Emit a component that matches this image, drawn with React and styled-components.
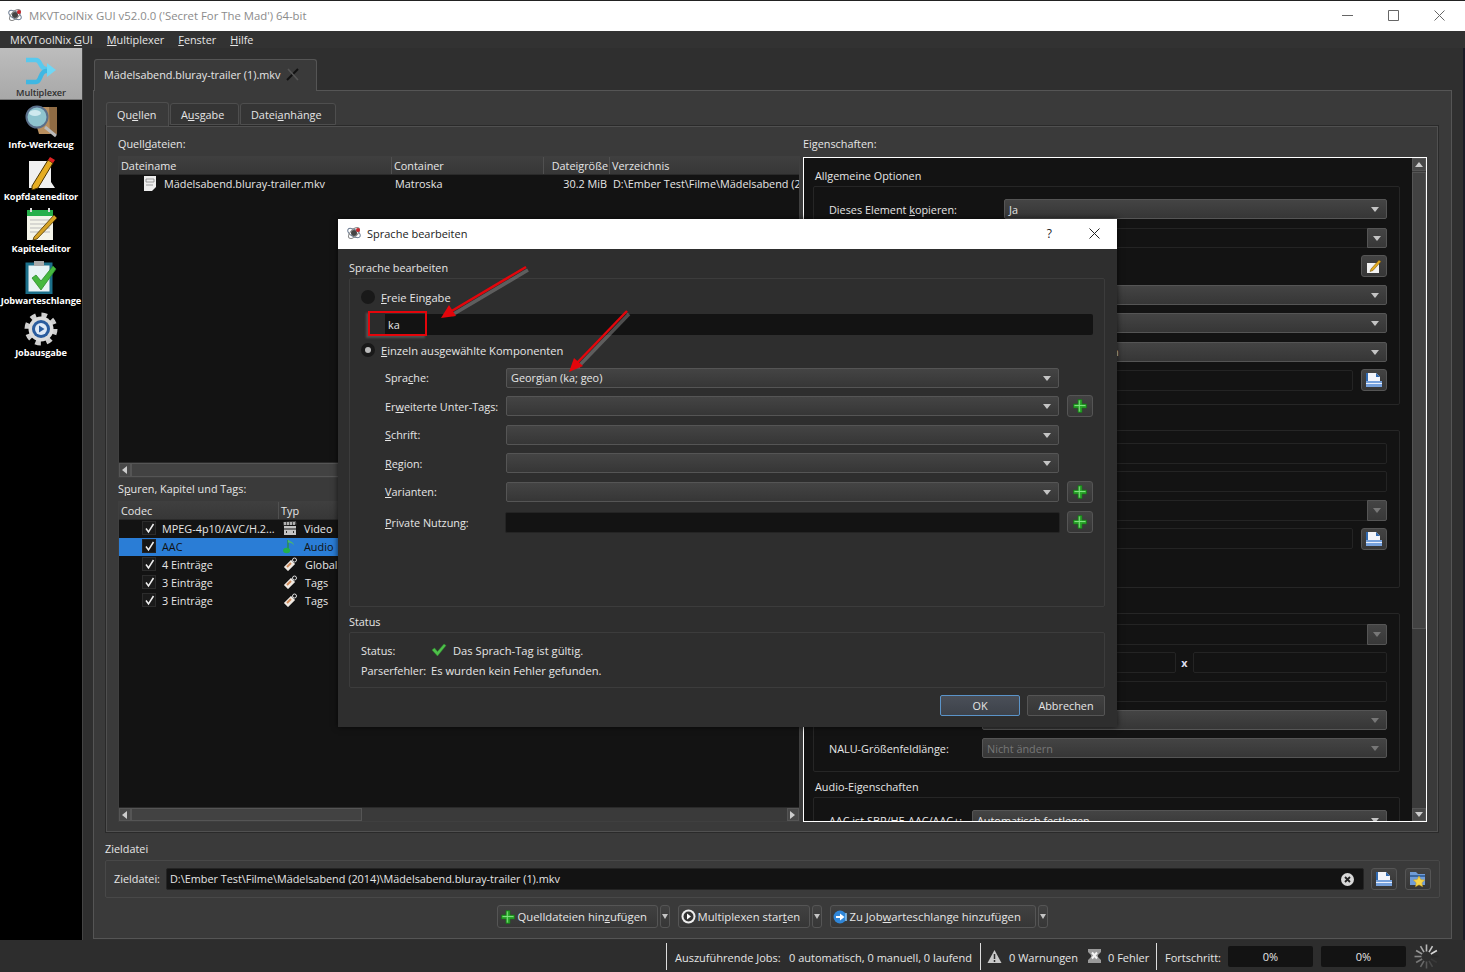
import React from "react";
import styled, { createGlobalStyle } from "styled-components";

const Global = createGlobalStyle`
  html, body { margin: 0; padding: 0; background: #1b1b26; overflow: hidden; }
  * { box-sizing: border-box; }
  u { text-underline-offset: 1px; }
`;
const Root = styled.div`
  position: relative; width: 1465px; height: 972px; overflow: hidden;
  display: flex; flex-direction: column; background: #2f2f2f;
  font-family: "Open Sans", "Noto Sans", sans-serif; font-size: 10.85px; color: #e6e6e6; white-space: nowrap;
`;
const TitleBar = styled.div`
  height: 31px; flex: none; background: #fff; border-top: 1px solid #222; display: flex; align-items: center;
  padding: 0 0 2px 7px; color: #8b8b8b; font-size: 11.35px; gap: 6px;
`;
const WinBtns = styled.div`margin-left: auto; display: flex; align-items: center; gap: ${p => p.$gap || 35}px; padding-right: ${p => p.$pr ?? 20}px; color: #666;`;
const MenuBar = styled.div`height: 17px; flex: none; display: flex; background: #323232; padding-left: 10px; gap: 14px; align-items: center;`;
const Middle = styled.div`flex: 1; display: flex; min-height: 0;`;
const Sidebar = styled.div`width: 83px; flex: none; background: #000; border-right: 1px solid #444; display: flex; flex-direction: column;`;
const SideItem = styled.div`
  height: 52px; display: flex; flex-direction: column; align-items: center; justify-content: flex-end; padding-bottom: ${p => p.$active ? 0 : 1}px;
  font-weight: 700; font-size: 9.2px; letter-spacing: -.1px; color: ${p => p.$active ? "#303030" : "#fff"};
  background: ${p => p.$active ? "linear-gradient(#bdbdbd,#a8a8a8)" : "transparent"};
  ${p => p.$active ? "font-weight:600; border-bottom:1px solid #777;" : ""}
`;
const Main = styled.div`flex: 1; padding: 11px 11px 1px 10px; display: flex; flex-direction: column; min-width: 0; border-right: 2px solid #1b1b26;`;
const FileTabRow = styled.div`display: flex; height: 31px; flex: none; position: relative; z-index: 1;`;
const FileTab = styled.div`
  width: 223px; height: 32px; background: #3a3a3a; border: 1px solid #555; border-bottom: none; border-radius: 3px 3px 0 0; padding-bottom: 2px;
  display: flex; align-items: center; gap: 6px; padding-left: 9px; margin-left: 1px;
`;
const Pane = styled.div`
  flex: 1; background: #3a3a3a; border: 1px solid #555; padding: 11px 12px 0 11px; display: flex; flex-direction: column; min-height: 0;
`;
const InnerTabs = styled.div`display: flex; gap: 1px; height: 23px; flex: none; position: relative; z-index: 1; padding-left: 1px;`;
const InnerTab = styled.div`
  width: ${p => p.$w}px; height: ${p => p.$on ? 24 : 22}px; margin-top: ${p => p.$on ? 0 : 1}px; background: ${p => p.$on ? "#3a3a3a" : "#353535"};
  border: 1px solid #4e4e4e; border-bottom: ${p => p.$on ? "none" : "1px solid #4e4e4e"}; border-radius: 3px 3px 0 0;
  display: flex; align-items: center; padding-left: 10px;
`;
const InnerPane = styled.div`
  height: 708px; flex: none; border: 1px solid #2a2a2a; box-shadow: inset 0 0 0 1px #505050; padding: 10px 11px 10px 12px; display: flex; gap: 3px;
`;
const LeftCol = styled.div`width: 682px; flex: none; display: flex; flex-direction: column;`;
const RightCol = styled.div`flex: 1; display: flex; flex-direction: column; min-width: 0;`;
const PaneLabel = styled.div`height: ${p => p.$h || 20}px; flex: none; display: flex; align-items: center; padding-bottom: ${p => p.$pb || 0}px;`;
const Tree = styled.div`
  height: ${p => p.$h}px; flex: none; background: #131313; border: 1px solid #3f3f3f; display: flex; flex-direction: column; overflow: hidden;
`;
const Header = styled.div`
  height: 18px; flex: none; display: grid; grid-template-columns: ${p => p.$cols}; background: linear-gradient(#3f3f3f,#373737); border-bottom: 1px solid #2a2a2a;
`;
const HCell = styled.div`padding-left: 2px; padding-right: ${p => p.$pr || 0}px; border-right: ${p => p.$last ? "none" : "1px solid #505050"}; display: flex; align-items: center; overflow: hidden; justify-content: ${p => p.$right ? "flex-end" : "flex-start"};`;
const TreeRow = styled.div`
  height: 18px; flex: none; display: grid; grid-template-columns: ${p => p.$cols}; align-items: center; padding-bottom: 2px; background: ${p => p.$sel ? "#2a7dd6" : "transparent"}; color: ${p => p.$sel ? "#111" : "#e6e6e6"};
`;
const Cell = styled.div`display: flex; align-items: center; overflow: hidden; padding-left: ${p => p.$pl || 0}px; padding-right: ${p => p.$pr || 0}px; justify-content: ${p => p.$right ? "flex-end" : "flex-start"}; gap: ${p => p.$gap || 0}px;`;
const CheckBox = styled.div`
  width: 14px; height: 14px; flex: none; background: ${p => p.$sel ? "#161616" : "#1a1a1a"}; border: 1px solid ${p => p.$sel ? "#222" : "#2c2c2c"}; display: flex; align-items: center; justify-content: center; margin-right: 6px;
`;
const Spacer = styled.div`flex: 1;`;
const HScroll = styled.div`height: ${p => p.$h}px; flex: none; background: #3a3a3a; border-top: 1px solid #2a2a2a; display: flex; align-items: stretch;`;
const ScrollBtn = styled.div`width: 12px; flex: none; background: #484848; border: 1px solid #555; display: flex; align-items: center; justify-content: center; color: #ccc;`;
const Thumb = styled.div`width: ${p => p.$w}px; flex: none; background: #424242; border: 1px solid #555;`;
const PropsFrame = styled.div`
  margin-top: 1px; height: 665px; flex: none; border: 1px solid #fff; background: #131313; display: flex; overflow: hidden;
`;
const PropsContent = styled.div`flex: 1; min-width: 0; padding-left: 9px; padding-right: 12px; overflow: hidden;`;
const VScroll = styled.div`width: 14px; flex: none; background: #3a3a3a; display: flex; flex-direction: column;`;
const VBtn = styled.div`height: 13px; flex: none; background: #484848; border: 1px solid #555; display: flex; align-items: center; justify-content: center; color: #ccc;`;
const VThumb = styled.div`height: 457px; flex: none; background: #424242; border: 1px solid #555; margin-top: 1px;`;
const SectionTitle = styled.div`height: ${p => p.$h || 25}px; padding-top: ${p => p.$pt || 7}px; line-height: 16px; padding-left: 2px;`;
const Group = styled.div`
  height: ${p => p.$h}px; border: 1px solid #262626; border-radius: 2px; padding: ${p => p.$pt || 8}px 12px 0 15px;
`;
const Row = styled.div`height: 28.5px; display: flex; align-items: center; gap: ${p => p.$gap || 8}px; margin-top: ${p => p.$mt || 0}px;`;
const Label = styled.div`width: ${p => p.$w}px; flex: none; margin-right: -8px;`;
const Combo = styled.div`
  flex: ${p => p.$w ? "none" : 1}; width: ${p => p.$w ? p.$w + "px" : "auto"}; min-width: 0; height: 20px; border: 1px solid #555; border-radius: 2px; background: linear-gradient(#444,#363636);
  display: flex; align-items: center; padding-left: 4px; color: ${p => p.$dim ? "#777" : "#e6e6e6"}; position: relative;
`;
const DownArrow = styled.i`
  position: absolute; right: ${p => p.$r || 7}px; top: 7px; width: 0; height: 0; border-left: 4px solid transparent; border-right: 4px solid transparent; border-top: 5px solid ${p => p.$dim ? "#777" : "#c4c4c4"};
`;
const DarkField = styled.div`
  flex: ${p => p.$w ? "none" : 1}; width: ${p => p.$w ? p.$w + "px" : "auto"}; min-width: 0; height: ${p => p.$h || 21}px; background: #131313; border: 1px solid ${p => p.$line || "#242424"}; border-radius: 2px; display: flex; align-items: center; padding-left: 3px; position: relative; margin-left: ${p => p.$ml || 0}px; margin-right: ${p => p.$mr || 0}px;
`;
const ComboCap = styled.div`
  position: absolute; right: -1px; top: -1px; bottom: -1px; width: 20px; background: linear-gradient(#444,#383838); border: 1px solid #555; border-radius: 0 2px 2px 0;
`;
const IconBtn = styled.div`
  width: 26px; height: 22px; flex: none; background: linear-gradient(#434343,#363636); border: 1px solid #555; border-radius: 3px; display: flex; align-items: center; justify-content: center; margin-left: ${p => p.$ml || 0}px;
`;
const XMark = styled.div`width: 17px; text-align: center; flex: none; font-weight: 700; margin: 0 -8px; color: #dde;`;
const DestTitle = styled.div`height: 27px; flex: none; display: flex; align-items: flex-end; padding-bottom: 4px;`;
const DestBox = styled.div`
  height: 38px; flex: none; width: 1335px; border: 1px solid #484848; border-radius: 2px; display: flex; align-items: center; padding: 0 8px 0 8px; gap: 6px;
`;
const DestText = styled.span`padding-bottom: 2px;`;
const Actions = styled.div`height: 37px; flex: none; display: flex; align-items: center; justify-content: center; gap: 8px; font-size: 11.3px;`;
const SplitBtn = styled.div`display: flex; gap: 2px;`;
const ActionBtn = styled.div`
  height: 23px; width: ${p => p.$w}px; background: linear-gradient(#414141,#363636); border: 1px solid #555; border-radius: 3px; display: flex; align-items: center; padding-left: 2px; gap: 2px; color: #e6e6e6;
`;
const DropBtn = styled.div`
  position: relative; height: 23px; width: 10px; background: linear-gradient(#414141,#363636); border: 1px solid #555; border-radius: 3px;
`;
const SmallDown = styled(DownArrow)`right: 1px; top: 8px; border-left-width: 3px; border-right-width: 3px; border-top-width: 5px;`;
const StatusBar = styled.div`height: 32px; flex: none; display: flex; align-items: center; padding-left: 666px; background: #2d2d2d; position: relative; font-size: 11px;`;
const Sep = styled.div`width: 1px; height: 27px; background: #ddd; flex: none; margin-right: ${p => p.$mr}px;`;
const StatusText = styled.span`width: ${p => p.$w}px; flex: none; padding-top: 3px; margin-left: ${p => p.$ml || 0}px;`;
const Progress = styled.div`width: 85px; height: 21px; flex: none; background: #131313; display: flex; align-items: center; justify-content: center; margin-right: ${p => p.$mr || 0}px; border-radius: 2px;`;
const Dialog = styled.div`
  position: absolute; left: 338px; top: 219px; width: 779px; height: 508px; display: flex; flex-direction: column; background: #2e2e2e; box-shadow: 0 0 6px rgba(0,0,0,.7);
`;
const DlgTitle = styled.div`height: 30px; flex: none; background: #fff; color: #222; display: flex; align-items: center; padding: 0 17px 2px 8px; gap: 5px; font-size: 11px;`;
const HelpMark = styled.span`color: #222; font-size: 12px;`;
const DlgBody = styled.div`flex: 1; padding: 0 12px 0 11px; display: flex; flex-direction: column;`;
const DlgCaption = styled.div`height: ${p => p.$h}px; flex: none; display: flex; align-items: center; padding-top: ${p => p.$pt || 0}px;`;
const DlgBox = styled.div`height: ${p => p.$h}px; flex: none; border: 1px solid #3c3c3c; border-radius: 2px; padding: ${p => p.$pt}px 11px 0 ${p => p.$pl}px;`;
const RadioRow = styled.div`height: 20px; display: flex; align-items: center; gap: 6px; font-size: 11.15px;`;
const Radio = styled.div`
  width: 14px; height: 14px; border-radius: 50%; background: #191919; display: flex; align-items: center; justify-content: center;
  &::after { content: ""; width: 6px; height: 6px; border-radius: 50%; background: ${p => p.$on ? "#bbb" : "transparent"}; }
`;
const FreeInput = styled.div`height: 21px; margin: 7px 0 5px 10px; background: #131313; border-radius: 2px; display: flex; align-items: center; padding-left: 17px;`;
const DlgRows = styled.div`padding-left: 24px; margin-top: 3.5px;`;
const StatusLine = styled.div`height: 20.5px; display: flex; align-items: center; font-size: 11.2px;`;
const StatusKey = styled.div`width: 70px; flex: none; font-size: 10.85px;`;
const StatusMsg = styled.span`margin-left: 6px;`;
const DlgButtons = styled.div`display: flex; justify-content: flex-end; gap: 7px; margin-top: 7px;`;
const DlgBtn = styled.div`
  width: ${p => p.$w}px; height: 21px; border-radius: 2px; display: flex; align-items: center; justify-content: center;
  background: ${p => p.$primary ? "linear-gradient(#4a4f58,#3d424a)" : "linear-gradient(#414141,#363636)"}; border: 1px solid ${p => p.$primary ? "#5b94c9" : "#555"};
`;
const RedBox = styled.div`
  position: absolute; left: 30px; top: 92px; width: 59px; height: 25px; border: 2px solid #e4050b; box-shadow: -2px 2px 2px rgba(110,110,110,.55);
  background: linear-gradient(90deg, #2b2b2b 0 15px, transparent 15px);
`;
const ArrowLayer = styled.svg`position: absolute; left: 0; top: 0; overflow: visible; pointer-events: none;`;

/* icons */
const Plus = ({ s = 16 }) => (
  <svg width={s} height={s} viewBox="0 0 16 16"><path d="M6 1.5h4v4.500h4.500v4H10v4.500H6V10H1.500V6H6z" fill="#2aa52a" stroke="#177217" strokeWidth=".7" /><path d="M7.300 2.500v11M2.500 7.500h11" stroke="#7fe07f" strokeWidth="1" /></svg>
);
const Floppy = () => (
  <svg width="18" height="16" viewBox="0 0 18 16"><path d="M1 1h2v8H1z" fill="#2f69b0" /><path d="M3 1h8l4 4v5H3z" fill="#f2f4fa" /><path d="M11 1l4 4h-4z" fill="#2f69b0" /><path d="M1 9h16v6H1z" fill="#76a1dc" /><path d="M1 11.500h16" stroke="#e8f0ff" strokeWidth="1" /></svg>
);
const FolderStar = () => (
  <svg width="18" height="18" viewBox="0 0 18 18"><path d="M1 2h6l2 2h7v11H1z" fill="#6f9cd8" /><path d="M1 6h15" stroke="#27568f" strokeWidth="1.500" /><path d="M10 6l1.800 3.600 3.900.5-2.800 2.700.7 3.900-3.600-1.900-3.500 1.900.7-3.900L4.300 10l3.900-.5z" fill="#f7d64b" stroke="#c89a1c" strokeWidth=".5" /></svg>
);
const EditDoc = () => (
  <svg width="18" height="16" viewBox="0 0 18 16"><path d="M2 5h12v10H2z" fill="#f2f2f2" /><path d="M6 11l8-9 2 1.500-8 9-3 1z" fill="#e2aa20" stroke="#6b4a00" strokeWidth=".5" /></svg>
);
const FileIco = () => (
  <svg width="12" height="15" viewBox="0 0 12 15"><path d="M0 0h12v11l-4 4H0z" fill="#ededed" /><path d="M2 3h8v3H2zM2 9h7" fill="#ededed" stroke="#888" strokeWidth=".8" /></svg>
);
const Clapper = () => (
  <svg width="14" height="15" viewBox="0 0 14 15"><path d="M1 5h12v9H1z" fill="#c4c4c4" /><path d="M0 1l13-1 .5 3.500-13 1z" fill="#555" /><path d="M2 1v3M5 1v3M8 1v3M11 1v3" stroke="#eee" strokeWidth="1.200" /><path d="M1 8h12" stroke="#333" strokeWidth="1.200" /><path d="M3 11h1M10 11h1" stroke="#333" strokeWidth="2" /></svg>
);
const Note = () => (
  <svg width="14" height="16" viewBox="0 0 14 16"><path d="M5 2v10" stroke="#2a8f45" strokeWidth="1.400" /><path d="M5 1c1 3 6 2 6 7-1-3-3-3-6-3.500z" fill="#4cb96a" /><ellipse cx="3.600" cy="12.500" rx="3.500" ry="2.700" fill="#23b04c" /></svg>
);
const Tag = () => (
  <svg width="15" height="15" viewBox="0 0 15 15"><path d="M1 10l7-7 4 4-7 7z" fill="#efe9e2" stroke="#aaa" strokeWidth=".5" /><path d="M4 10l4-4" stroke="#d08a5a" strokeWidth="2" /><circle cx="11.500" cy="3" r="2" fill="none" stroke="#ddd" strokeWidth="1" /></svg>
);
const Tick = () => (
  <svg width="11" height="11" viewBox="0 0 11 11"><path d="M2 5.500l2.500 3.500L9.500 1" fill="none" stroke="#f0f0f0" strokeWidth="1.500" /></svg>
);
const GreenCheck = () => (
  <svg width="16" height="14" viewBox="0 0 16 14"><path d="M1 7l2.500-2 3 3.500L13 1l2 1.500L6.500 13z" fill="#4ec04a" stroke="#2c8a2c" strokeWidth=".5" /></svg>
);
const PlayCircle = () => (
  <svg width="15" height="15" viewBox="0 0 15 15"><circle cx="7.500" cy="7.500" r="7" fill="#eee" /><circle cx="7.500" cy="7.500" r="5" fill="#333" /><path d="M6 4.500l4 3-4 3z" fill="#fff" /></svg>
);
const BlueArrow = () => (
  <svg width="15" height="14" viewBox="0 0 15 14"><circle cx="7" cy="7" r="6.500" fill="#2f86d8" /><path d="M3 6h4V3.500L11.500 7 7 10.500V8H3z" fill="#fff" /><path d="M13 3v8" stroke="#8cc7f5" strokeWidth="1.500" /></svg>
);
const ClearX = () => (
  <svg width="13" height="13" viewBox="0 0 13 13" style={{ position: "absolute", right: 9, top: 4 }}><circle cx="6.500" cy="6.500" r="6.500" fill="#d8d8d8" /><path d="M4 4l5 5M9 4l-5 5" stroke="#222" strokeWidth="1.800" /></svg>
);
const WarnIco = () => (
  <svg width="15" height="15" viewBox="0 0 15 15"><path d="M7.500 1L14.500 14H.5z" fill="#c9c9c9" /><path d="M7.500 5v5M7.500 11v2" stroke="#2d2d2d" strokeWidth="1.500" /></svg>
);
const ErrIco = () => (
  <svg width="13" height="14" viewBox="0 0 13 14"><path d="M0 0h13v3l-3 3v2l3 3v3H0v-3l3-3V6L0 3z" fill="#9a9a9a" /><path d="M4 3.500l5 6M9 3.500l-5 6" stroke="#f4f4f4" strokeWidth="2" /></svg>
);
const Spinner = () => (
  <svg width="27" height="27" viewBox="0 0 27 27">{Array.from({ length: 12 }).map((_, i) => {
    const a = i * Math.PI / 6; const c = 40 + i * 16;
    return <line key={i} x1={13.500 + 5 * Math.cos(a)} y1={13.500 + 5 * Math.sin(a)} x2={13.500 + 12 * Math.cos(a)} y2={13.500 + 12 * Math.sin(a)} stroke={`rgb(${c},${c},${c})`} strokeWidth="1.600" />;
  })}</svg>
);
const AppIco = () => (
  <svg width="16" height="16" viewBox="0 0 16 16"><ellipse cx="8" cy="8" rx="7" ry="3.500" fill="none" stroke="#6a7a90" strokeWidth="1" transform="rotate(30 8 8)" /><ellipse cx="8" cy="8" rx="7" ry="3.500" fill="none" stroke="#8a8a8a" strokeWidth="1" transform="rotate(-45 8 8)" /><circle cx="8" cy="8" r="3" fill="#444" /><circle cx="12" cy="5" r="2" fill="#c8262c" /></svg>
);
const PinX = () => (
  <svg width="13" height="13" viewBox="0 0 13 13"><path d="M1 12L12 1" stroke="#111" strokeWidth="2" /><path d="M2 1l10 11" stroke="#555" strokeWidth="1.600" /></svg>
);
const MuxIco = () => (
  <svg width="32" height="30" viewBox="0 0 32 30"><path d="M1 4h10c5 0 4 9 10 9h4" fill="none" stroke="#58c9ee" strokeWidth="4.500" /><path d="M1 26h10c5 0 4-11 10-11h4" fill="none" stroke="#3fb7e2" strokeWidth="4.500" /><path d="M22 7l9 7-9 7z" fill="#6fd7f5" /></svg>
);
const InfoIco = () => (
  <svg width="36" height="34" viewBox="0 0 36 34"><path d="M8 3h26v27H16z" fill="#b98f5f" /><path d="M26 3h8v27h-7z" fill="#8f6b44" /><path d="M22 23l11 9" stroke="#bbb" strokeWidth="3" /><circle cx="14" cy="13" r="10.500" fill="#8fc4cf" stroke="#5a6f8a" strokeWidth="2" /><ellipse cx="12" cy="9" rx="6" ry="3" fill="#cfe9ef" /></svg>
);
const HeaderIco = () => (
  <svg width="34" height="34" viewBox="0 0 34 34"><path d="M5 5h22v21l4 6H5z" fill="#f0f0f0" /><path d="M8 30L24 4l5 3-15 25-6 2z" fill="#e5ad23" stroke="#4b3400" strokeWidth="1" /><path d="M24 4l2-3 5 3-2 3z" fill="#d22" /></svg>
);
const ChapterIco = () => (
  <svg width="34" height="36" viewBox="0 0 34 36"><path d="M3 6h26v28H3z" fill="#f4f4ea" /><path d="M3 4h26v6H3z" fill="#27b04b" /><path d="M6 14h20M6 18h20M6 22h20M6 26h20" stroke="#bbb" /><path d="M7 2v4M25 2v4" stroke="#ddd" strokeWidth="2" /><path d="M10 31L30 9l3 3-20 21-4 1z" fill="#d6a325" stroke="#4b3400" strokeWidth=".8" /></svg>
);
const QueueIco = () => (
  <svg width="32" height="34" viewBox="0 0 32 34"><path d="M2 4h24v29H2z" fill="#e8f3f5" stroke="#1b6f8a" strokeWidth="3" /><path d="M9 1h10v5H9z" fill="#aaa" /><path d="M7 18l4-3 5 6L28 6l3 3-15 21z" fill="#46b83f" stroke="#2a8a2a" strokeWidth=".8" /></svg>
);
const GearIco = () => (
  <svg width="34" height="34" viewBox="0 0 34 34"><circle cx="17" cy="17" r="14" fill="none" stroke="#cfcfcf" strokeWidth="5" strokeDasharray="5.500 5.500" /><circle cx="17" cy="17" r="12.500" fill="#dcdcdc" /><circle cx="17" cy="17" r="9" fill="#2a5c9e" /><circle cx="17" cy="17" r="6" fill="#dfe9f6" /><path d="M15 13.500l5.500 3.500-5.500 3.500z" fill="#2a5c9e" /></svg>
);
const Tri = ({ dir }) => {
  const d = { l: "M6 0v8L1 4z", r: "M1 0v8l5-4z", u: "M0 6h8L4 1z", d: "M0 1h8L4 6z" }[dir];
  return <svg width="8" height="8" viewBox="0 0 8 8"><path d={d} fill="#ccc" /></svg>;
};

const C1 = "273px 152px 66px 1fr";
const C2 = "160px 1fr";
const tracks = [
  ["MPEG-4p10/AVC/H.2...", <Clapper />, "Video"],
  ["AAC", <Note />, "Audio", true],
  ["4 Einträge", <Tag />, "Global"],
  ["3 Einträge", <Tag />, "Tags"],
  ["3 Einträge", <Tag />, "Tags"],
];

function PropertiesPanel() {
  return (
    <PropsFrame>
      <PropsContent>
        <SectionTitle $h={28} $pt={10}>Allgemeine Optionen</SectionTitle>
        <Group $h={219}>
          <Row><Label $w={175}>Dieses Element <u>k</u>opieren:</Label><Combo>Ja<DownArrow /></Combo></Row>
          <Row><Label $w={175} /><DarkField $h={20}><ComboCap><DownArrow $r={5} /></ComboCap></DarkField></Row>
          <Row><Spacer /><IconBtn><EditDoc /></IconBtn></Row>
          <Row><Label $w={175} /><Combo><DownArrow /></Combo></Row>
          <Row><Label $w={175} /><Combo><DownArrow /></Combo></Row>
          <Row><Label $w={175} /><Combo>Aus Quelldatei ziehen<DownArrow /></Combo></Row>
          <Row><Label $w={175} /><DarkField /><IconBtn><Floppy /></IconBtn></Row>
        </Group>
        <SectionTitle />
        <Group $h={158}>
          <Row><Label $w={175} /><DarkField /></Row>
          <Row><Label $w={175} /><DarkField /></Row>
          <Row><Label $w={175} /><DarkField><ComboCap><DownArrow $r={5} $dim /></ComboCap></DarkField></Row>
          <Row><Label $w={175} /><DarkField /><IconBtn><Floppy /></IconBtn></Row>
        </Group>
        <SectionTitle />
        <Group $h={159} $pt={6}>
          <Row><Label $w={153} /><DarkField><ComboCap><DownArrow $r={5} $dim /></ComboCap></DarkField></Row>
          <Row><Label $w={153} /><DarkField /><XMark>x</XMark><DarkField $w={194} /></Row>
          <Row><Label $w={153} /><DarkField /></Row>
          <Row><Label $w={153} /><Combo $dim><DownArrow $dim /></Combo></Row>
          <Row><Label $w={153}>NALU-Größenfeldlänge:</Label><Combo $dim>Nicht ändern<DownArrow $dim /></Combo></Row>
        </Group>
        <SectionTitle>Audio-Eigenschaften</SectionTitle>
        <Group $h={60}>
          <Row><Label $w={143}>AAC ist SBR/HE-AAC/AAC+:</Label><Combo>Automatisch festlegen<DownArrow /></Combo></Row>
        </Group>
      </PropsContent>
      <VScroll>
        <VBtn><Tri dir="u" /></VBtn>
        <VThumb />
        <Spacer />
        <VBtn><Tri dir="d" /></VBtn>
      </VScroll>
    </PropsFrame>
  );
}

function LanguageDialog() {
  return (
    <Dialog>
      <DlgTitle><AppIco /><span>Sprache bearbeiten</span><WinBtns $gap={37} $pr={0}><HelpMark>?</HelpMark><svg width="11" height="11" viewBox="0 0 11 11"><path d="M.5.5l10 10M10.500.5l-10 10" stroke="#222" /></svg></WinBtns></DlgTitle>
      <DlgBody>
        <DlgCaption $h={29} $pt={8}>Sprache bearbeiten</DlgCaption>
        <DlgBox $h={329} $pt={8} $pl={11}>
          <RadioRow><Radio /><span><u>F</u>reie Eingabe</span></RadioRow>
          <FreeInput>ka</FreeInput>
          <RadioRow><Radio $on /><span><u>E</u>inzeln ausgewählte Komponenten</span></RadioRow>
          <DlgRows>
            <Row><Label $w={121}>Spra<u>c</u>he:</Label><Combo $w={553}>Georgian (ka; geo)<DownArrow /></Combo></Row>
            <Row><Label $w={121}>Er<u>w</u>eiterte Unter-Tags:</Label><Combo $w={553}><DownArrow /></Combo><IconBtn><Plus /></IconBtn></Row>
            <Row><Label $w={121}><u>S</u>chrift:</Label><Combo $w={553}><DownArrow /></Combo></Row>
            <Row><Label $w={121}><u>R</u>egion:</Label><Combo $w={553}><DownArrow /></Combo></Row>
            <Row><Label $w={121}><u>V</u>arianten:</Label><Combo $w={553}><DownArrow /></Combo><IconBtn><Plus /></IconBtn></Row>
            <Row $mt={2}><Label $w={121}><u>P</u>rivate Nutzung:</Label><DarkField $w={555} $ml={-1} $mr={-1} /><IconBtn><Plus /></IconBtn></Row>
          </DlgRows>
        </DlgBox>
        <DlgCaption $h={25} $pt={3}>Status</DlgCaption>
        <DlgBox $h={56} $pt={7} $pl={11}>
          <StatusLine><StatusKey>Status:</StatusKey><GreenCheck /><StatusMsg>Das Sprach-Tag ist gültig.</StatusMsg></StatusLine>
          <StatusLine><StatusKey>Parserfehler:</StatusKey>Es wurden kein Fehler gefunden.</StatusLine>
        </DlgBox>
        <DlgButtons><DlgBtn $primary $w={80}>OK</DlgBtn><DlgBtn $w={78}>Abbrechen</DlgBtn></DlgButtons>
      </DlgBody>
      <RedBox />
      <ArrowLayer width="779" height="508">
        <g transform="translate(2 3)" opacity=".45" stroke="#999" strokeWidth="3.500"><path d="M188 48L112 93" /><path d="M289 92L238 145" /></g>
        <path d="M188 48L112 93" stroke="#e4050b" strokeWidth="2.500" /><path d="M103 99l8-13 7 11z" fill="#e4050b" />
        <path d="M289 92L238 145" stroke="#e4050b" strokeWidth="2.500" /><path d="M231 153l5-14 9 8z" fill="#e4050b" />
      </ArrowLayer>
    </Dialog>
  );
}

export default function App() {
  return (
    <Root>
      <Global />
      <TitleBar>
        <AppIco />MKVToolNix GUI v52.0.0 ('Secret For The Mad') 64-bit
        <WinBtns>
          <svg width="11" height="11" viewBox="0 0 11 11"><path d="M0 5.500h11" stroke="#666" /></svg>
          <svg width="11" height="11" viewBox="0 0 11 11"><path d="M.5.5h10v10H.5z" fill="none" stroke="#666" /></svg>
          <svg width="11" height="11" viewBox="0 0 11 11"><path d="M.5.5l10 10M10.500.5l-10 10" stroke="#666" /></svg>
        </WinBtns>
      </TitleBar>
      <MenuBar>
        <span>MKVToolNix <u>G</u>UI</span><span><u>M</u>ultiplexer</span><span><u>F</u>enster</span><span><u>H</u>ilfe</span>
      </MenuBar>
      <Middle>
        <Sidebar>
          <SideItem $active><MuxIco />Multiplexer</SideItem>
          <SideItem><InfoIco />Info-Werkzeug</SideItem>
          <SideItem><HeaderIco />Kopfdateneditor</SideItem>
          <SideItem><ChapterIco />Kapiteleditor</SideItem>
          <SideItem><QueueIco />Jobwarteschlange</SideItem>
          <SideItem><GearIco />Jobausgabe</SideItem>
        </Sidebar>
        <Main>
          <FileTabRow><FileTab>Mädelsabend.bluray-trailer (1).mkv <PinX /></FileTab></FileTabRow>
          <Pane>
            <InnerTabs>
              <InnerTab $on $w={63}><span>Qu<u>e</u>llen</span></InnerTab>
              <InnerTab $w={69}><span>A<u>u</u>sgabe</span></InnerTab>
              <InnerTab $w={96}><span>Datei<u>a</u>nhänge</span></InnerTab>
            </InnerTabs>
            <InnerPane>
              <LeftCol>
                <PaneLabel $pb={6}><span>Quell<u>d</u>ateien:</span></PaneLabel>
                <Tree $h={322}>
                  <Header $cols={C1}><HCell>Dateiname</HCell><HCell>Container</HCell><HCell $right $pr={1}>Dateigröße</HCell><HCell $last>Verzeichnis</HCell></Header>
                  <TreeRow $cols={C1}>
                    <Cell $pl={25} $gap={8}><FileIco />Mädelsabend.bluray-trailer.mkv</Cell><Cell $pl={3}>Matroska</Cell>
                    <Cell $right $pr={3}>30.2 MiB</Cell><Cell $pl={3}>D:\Ember Test\Filme\Mädelsabend (2</Cell>
                  </TreeRow>
                  <Spacer />
                  <HScroll $h={15}><ScrollBtn><Tri dir="l" /></ScrollBtn><Thumb $w={231} /></HScroll>
                </Tree>
                <PaneLabel $h={23} $pb={2}><span>S<u>p</u>uren, Kapitel und Tags:</span></PaneLabel>
                <Tree $h={321}>
                  <Header $cols={C2}><HCell>Codec</HCell><HCell $last>Typ</HCell></Header>
                  {tracks.map(([name, ico, type, sel], i) => (
                    <TreeRow key={i} $cols={C2} $sel={sel}>
                      <Cell $pl={23}><CheckBox $sel={sel}><Tick /></CheckBox><span>{name}</span></Cell>
                      <Cell $pl={4} $gap={7}>{ico}{type}</Cell>
                    </TreeRow>
                  ))}
                  <Spacer />
                  <HScroll $h={14}><ScrollBtn><Tri dir="l" /></ScrollBtn><Thumb $w={231} /><Spacer /><ScrollBtn><Tri dir="r" /></ScrollBtn></HScroll>
                </Tree>
              </LeftCol>
              <RightCol>
                <PaneLabel $pb={6}>Eigenschaften:</PaneLabel>
                <PropertiesPanel />
              </RightCol>
            </InnerPane>
            <DestTitle>Zieldatei</DestTitle>
            <DestBox>
              <DestText>Zieldatei:</DestText>
              <DarkField $h={22} $mr={1}><DestText>D:\Ember Test\Filme\Mädelsabend (2014)\Mädelsabend.bluray-trailer (1).mkv</DestText><ClearX /></DarkField>
              <IconBtn><Floppy /></IconBtn>
              <IconBtn $ml={2}><FolderStar /></IconBtn>
            </DestBox>
            <Actions>
              <SplitBtn><ActionBtn $w={161}><Plus /><span>Quelldateien hin<u>z</u>ufügen</span></ActionBtn><DropBtn><SmallDown /></DropBtn></SplitBtn>
              <SplitBtn><ActionBtn $w={132}><PlayCircle /><span>Multiplexen star<u>t</u>en</span></ActionBtn><DropBtn><SmallDown /></DropBtn></SplitBtn>
              <SplitBtn><ActionBtn $w={206}><BlueArrow /><span>Zu Job<u>w</u>arteschlange hinzufügen</span></ActionBtn><DropBtn><SmallDown /></DropBtn></SplitBtn>
            </Actions>
          </Pane>
        </Main>
      </Middle>
      <StatusBar>
        <Sep $mr={8} />
        <StatusText $w={114}>Auszuführende Jobs:</StatusText>
        <StatusText $w={191}>0 automatisch, 0 manuell, 0 laufend</StatusText>
        <Sep $mr={6} />
        <WarnIco />
        <StatusText $w={79} $ml={7}>0 Warnungen</StatusText>
        <ErrIco />
        <StatusText $w={48} $ml={7}>0 Fehler</StatusText>
        <Sep $mr={8} />
        <StatusText $w={63}>Fortschritt:</StatusText>
        <Progress $mr={8}>0%</Progress>
        <Progress $mr={7}>0%</Progress>
        <Spinner />
      </StatusBar>
      <LanguageDialog />
    </Root>
  );
}
